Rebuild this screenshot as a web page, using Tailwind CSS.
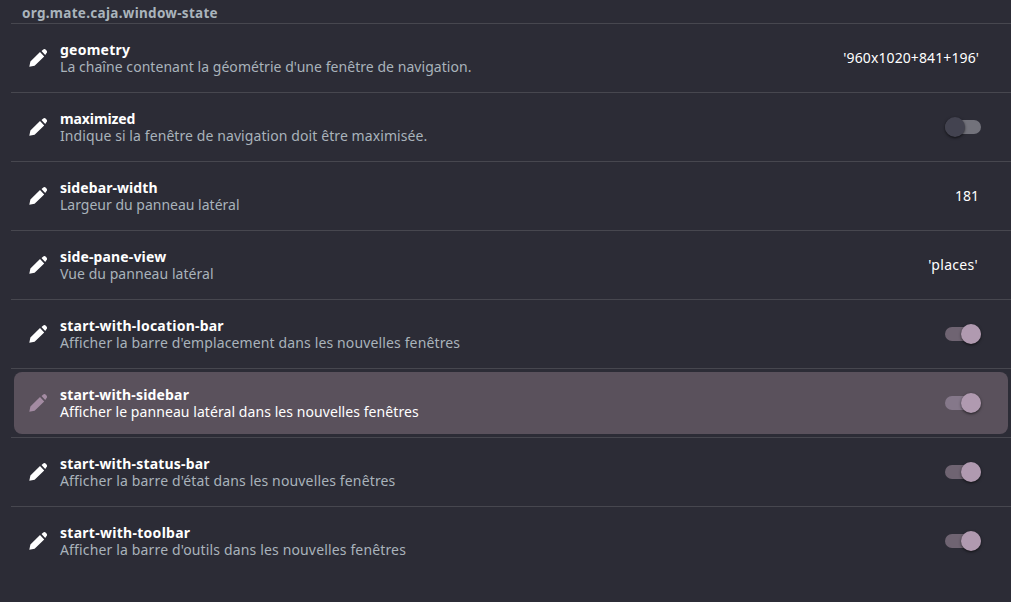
<!DOCTYPE html>
<html>
<head>
  <meta charset="utf-8">
  <title>org.mate.caja.window-state</title>
  <script src="https://cdn.jsdelivr.net/npm/@tailwindcss/browser@4"></script>
</head>
<body class="h-[602px] overflow-hidden bg-[#2c2c36] font-['Noto_Sans',sans-serif] text-[14px] leading-[17px] text-white">
  <div class="pl-[11px]">
    <div class="h-[24px] border-b border-[#47474f] pl-[11px] text-[13.5px] leading-[26px] font-bold tracking-[0.3px] text-[#aab4bc]">org.mate.caja.window-state</div>

    <!-- geometry -->
    <div class="h-[69px] border-b border-[#47474f] p-[3px]">
      <div class="flex h-[62px] items-center rounded-lg pl-[12px] pr-[29px]">
        <svg class="h-6 w-6 fill-white" viewBox="0 0 24 24"><path d="M3.3 20.8 4.4 15.5 14 6.1 18.2 10.4 8.6 19.7ZM15.5 5 17 3.7c.9-.8 2-.8 2.8 0l.7.7c.8.9.8 2-.1 2.8L19.2 9Z"/></svg>
        <div class="ml-[10px] flex-1">
          <div class="font-bold tracking-[0.25px]">geometry</div>
          <div class="tracking-[0.05px] text-[#a9b3bb]">La chaîne contenant la géométrie d'une fenêtre de navigation.</div>
        </div>
        <div class="-mt-[2px] tracking-[0.1px]">'960x1020+841+196'</div>
      </div>
    </div>

    <!-- maximized -->
    <div class="h-[69px] border-b border-[#47474f] p-[3px]">
      <div class="flex h-[62px] items-center rounded-lg pl-[12px] pr-[27px]">
        <svg class="h-6 w-6 fill-white" viewBox="0 0 24 24"><path d="M3.3 20.8 4.4 15.5 14 6.1 18.2 10.4 8.6 19.7ZM15.5 5 17 3.7c.9-.8 2-.8 2.8 0l.7.7c.8.9.8 2-.1 2.8L19.2 9Z"/></svg>
        <div class="ml-[10px] flex-1">
          <div class="font-bold tracking-[-0.1px]">maximized</div>
          <div class="tracking-[0.09px] text-[#a9b3bb]">Indique si la fenêtre de navigation doit être maximisée.</div>
        </div>
        <div class="relative h-[14px] w-[36px] rounded-full bg-[#72727b]">
          <div class="absolute top-[-3px] left-0 h-[20px] w-[20px] rounded-full bg-[#434350] shadow-sm shadow-black/50"></div>
        </div>
      </div>
    </div>

    <!-- sidebar-width -->
    <div class="h-[69px] border-b border-[#47474f] p-[3px]">
      <div class="flex h-[62px] items-center rounded-lg pl-[12px] pr-[29px]">
        <svg class="h-6 w-6 fill-white" viewBox="0 0 24 24"><path d="M3.3 20.8 4.4 15.5 14 6.1 18.2 10.4 8.6 19.7ZM15.5 5 17 3.7c.9-.8 2-.8 2.8 0l.7.7c.8.9.8 2-.1 2.8L19.2 9Z"/></svg>
        <div class="ml-[10px] flex-1">
          <div class="font-bold tracking-[0.08px]">sidebar-width</div>
          <div class="text-[#a9b3bb]">Largeur du panneau latéral</div>
        </div>
        <div class="-mt-[2px]">181</div>
      </div>
    </div>

    <!-- side-pane-view -->
    <div class="h-[69px] border-b border-[#47474f] p-[3px]">
      <div class="flex h-[62px] items-center rounded-lg pl-[12px] pr-[30px]">
        <svg class="h-6 w-6 fill-white" viewBox="0 0 24 24"><path d="M3.3 20.8 4.4 15.5 14 6.1 18.2 10.4 8.6 19.7ZM15.5 5 17 3.7c.9-.8 2-.8 2.8 0l.7.7c.8.9.8 2-.1 2.8L19.2 9Z"/></svg>
        <div class="ml-[10px] flex-1">
          <div class="font-bold tracking-[0.14px]">side-pane-view</div>
          <div class="tracking-[0.05px] text-[#a9b3bb]">Vue du panneau latéral</div>
        </div>
        <div class="-mt-[2px] tracking-[0.3px]">'places'</div>
      </div>
    </div>

    <!-- start-with-location-bar -->
    <div class="h-[69px] border-b border-[#47474f] p-[3px]">
      <div class="flex h-[62px] items-center rounded-lg pl-[12px] pr-[27px]">
        <svg class="h-6 w-6 fill-white" viewBox="0 0 24 24"><path d="M3.3 20.8 4.4 15.5 14 6.1 18.2 10.4 8.6 19.7ZM15.5 5 17 3.7c.9-.8 2-.8 2.8 0l.7.7c.8.9.8 2-.1 2.8L19.2 9Z"/></svg>
        <div class="ml-[10px] flex-1">
          <div class="font-bold tracking-[0.22px]">start-with-location-bar</div>
          <div class="tracking-[0.135px] text-[#a9b3bb]">Afficher la barre d'emplacement dans les nouvelles fenêtres</div>
        </div>
        <div class="relative h-[14px] w-[36px] rounded-full bg-[#6f6472]">
          <div class="absolute top-[-3px] right-0 h-[20px] w-[20px] rounded-full bg-[#b09ab0] shadow-sm shadow-black/50"></div>
        </div>
      </div>
    </div>

    <!-- start-with-sidebar (hovered) -->
    <div class="h-[69px] border-b border-[#47474f] p-[3px]">
      <div class="flex h-[62px] items-center rounded-lg bg-[#5a515c] pl-[12px] pr-[27px]">
        <svg class="h-6 w-6 fill-[#a38ba2]" viewBox="0 0 24 24"><path d="M3.3 20.8 4.4 15.5 14 6.1 18.2 10.4 8.6 19.7ZM15.5 5 17 3.7c.9-.8 2-.8 2.8 0l.7.7c.8.9.8 2-.1 2.8L19.2 9Z"/></svg>
        <div class="ml-[10px] flex-1">
          <div class="font-bold tracking-[0.17px]">start-with-sidebar</div>
          <div class="tracking-[0.07px]">Afficher le panneau latéral dans les nouvelles fenêtres</div>
        </div>
        <div class="relative h-[14px] w-[36px] rounded-full bg-[#85788a]">
          <div class="absolute top-[-3px] right-0 h-[20px] w-[20px] rounded-full bg-[#b09ab0] shadow-sm shadow-black/50"></div>
        </div>
      </div>
    </div>

    <!-- start-with-status-bar -->
    <div class="h-[69px] border-b border-[#47474f] p-[3px]">
      <div class="flex h-[62px] items-center rounded-lg pl-[12px] pr-[27px]">
        <svg class="h-6 w-6 fill-white" viewBox="0 0 24 24"><path d="M3.3 20.8 4.4 15.5 14 6.1 18.2 10.4 8.6 19.7ZM15.5 5 17 3.7c.9-.8 2-.8 2.8 0l.7.7c.8.9.8 2-.1 2.8L19.2 9Z"/></svg>
        <div class="ml-[10px] flex-1">
          <div class="font-bold tracking-[0.19px]">start-with-status-bar</div>
          <div class="tracking-[0.15px] text-[#a9b3bb]">Afficher la barre d'état dans les nouvelles fenêtres</div>
        </div>
        <div class="relative h-[14px] w-[36px] rounded-full bg-[#6f6472]">
          <div class="absolute top-[-3px] right-0 h-[20px] w-[20px] rounded-full bg-[#b09ab0] shadow-sm shadow-black/50"></div>
        </div>
      </div>
    </div>

    <!-- start-with-toolbar -->
    <div class="h-[69px] p-[3px]">
      <div class="flex h-[62px] items-center rounded-lg pl-[12px] pr-[27px]">
        <svg class="h-6 w-6 fill-white" viewBox="0 0 24 24"><path d="M3.3 20.8 4.4 15.5 14 6.1 18.2 10.4 8.6 19.7ZM15.5 5 17 3.7c.9-.8 2-.8 2.8 0l.7.7c.8.9.8 2-.1 2.8L19.2 9Z"/></svg>
        <div class="ml-[10px] flex-1">
          <div class="font-bold tracking-[0.28px]">start-with-toolbar</div>
          <div class="tracking-[0.15px] text-[#a9b3bb]">Afficher la barre d'outils dans les nouvelles fenêtres</div>
        </div>
        <div class="relative h-[14px] w-[36px] rounded-full bg-[#6f6472]">
          <div class="absolute top-[-3px] right-0 h-[20px] w-[20px] rounded-full bg-[#b09ab0] shadow-sm shadow-black/50"></div>
        </div>
      </div>
    </div>
  </div>
</body>
</html>
